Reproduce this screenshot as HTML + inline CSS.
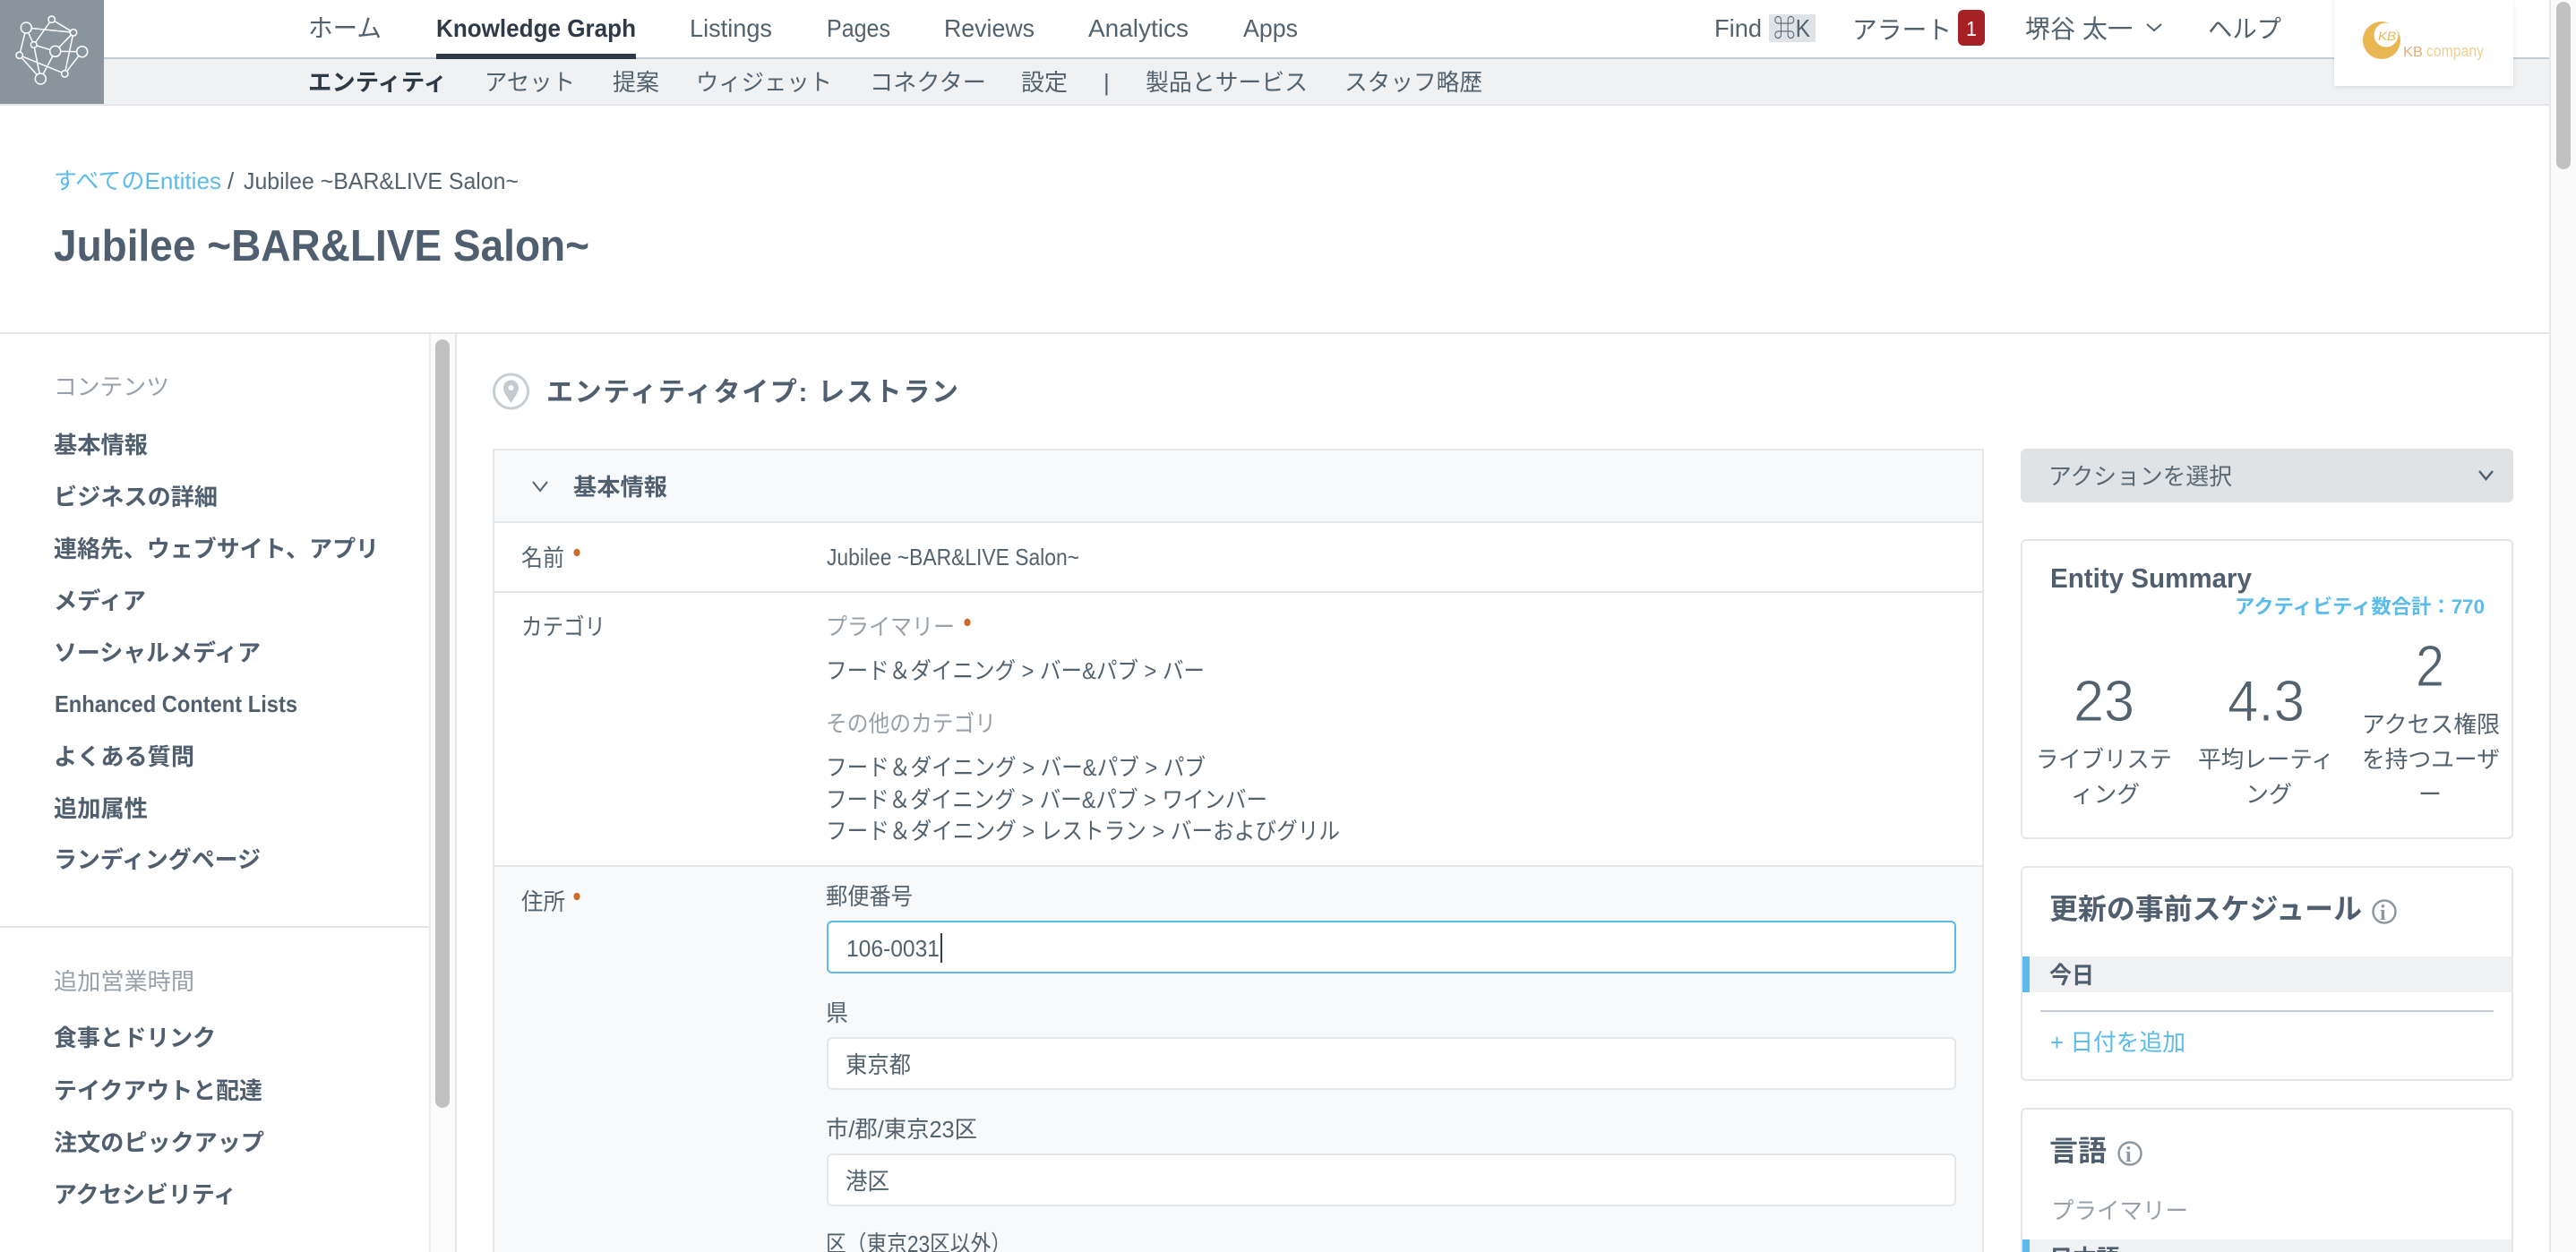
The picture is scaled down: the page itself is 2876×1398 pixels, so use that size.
<!DOCTYPE html>
<html lang="ja"><head><meta charset="utf-8"><title>Jubilee ~BAR&amp;LIVE Salon~</title>
<style>
html,body{margin:0;padding:0;width:2876px;height:1398px;overflow:hidden;background:#fff}
#page{position:relative;width:2876px;height:1398px;overflow:hidden;background:#fff}
.a{position:absolute;box-sizing:border-box}
svg.t{position:absolute;left:0;top:0}
svg.t text{font-family:"Liberation Sans","Noto Sans CJK JP",sans-serif;font-size:26px;fill:#53626f}
.b{font-weight:700}
.h{font-size:28px !important}
.g{fill:#98a1a9 !important}
.l{fill:#5bbcec !important}
.n{fill:#4f5f6f !important}
.big{font-size:65px !important;stroke:#fff;stroke-width:.9px}
</style></head><body>
<div id="page">
<!-- page chrome -->
<div class="a" style="left:116px;top:64px;width:2730px;height:2px;background:#c4ccd3"></div>
<div class="a" style="left:116px;top:66px;width:2730px;height:50px;background:#eff1f3"></div>
<div class="a" style="left:0;top:116px;width:2846px;height:2px;background:#e3e5e8"></div>
<div class="a" style="left:487px;top:60px;width:223px;height:6px;background:#2f3a48"></div>
<div class="a" style="left:0;top:0;width:116px;height:116px;background:#8a949d"></div>
<div class="a" style="left:1975px;top:16px;width:52px;height:31px;background:#e0e3e6"></div>
<div class="a" style="left:2186px;top:11px;width:30px;height:40px;background:#a72024;border-radius:6px"></div>
<div class="a" style="left:2606px;top:0;width:200px;height:96px;background:#fff;box-shadow:0 1px 4px rgba(0,0,0,.1)"></div>
<!-- page scrollbar -->
<div class="a" style="left:2846px;top:0;width:30px;height:1398px;background:#fafafa;border-left:2px solid #e8e8e8"></div>
<div class="a" style="left:2854px;top:2px;width:16px;height:187px;background:#c1c1c1;border-radius:8px"></div>
<!-- header divider -->
<div class="a" style="left:0;top:371px;width:2846px;height:2px;background:#e3e7ea"></div>
<!-- sidebar -->
<div class="a" style="left:479px;top:373px;width:31px;height:1025px;background:#fbfbfb;border-left:2px solid #ececec;border-right:2px solid #e3e7ea"></div>
<div class="a" style="left:486px;top:379px;width:16px;height:858px;background:#c1c1c1;border-radius:8px"></div>
<div class="a" style="left:0;top:1034px;width:479px;height:2px;background:#e3e7ea"></div>
<!-- main panel -->
<div class="a" style="left:550px;top:501px;width:1665px;height:900px;border:2px solid #e3e7ea;background:#fff"></div>
<div class="a" style="left:552px;top:503px;width:1661px;height:81px;background:#f8f9fb;border-bottom:2px solid #e3e7ea"></div>
<div class="a" style="left:552px;top:660px;width:1661px;height:2px;background:#e3e7ea"></div>
<div class="a" style="left:552px;top:966px;width:1661px;height:432px;background:#f8f9fb;border-top:2px solid #e3e7ea"></div>
<div class="a" style="left:923px;top:1028px;width:1261px;height:59px;background:#fff;border:2px solid #5bbcec;border-radius:6px"></div>
<div class="a" style="left:923px;top:1158px;width:1261px;height:59px;background:#fff;border:2px solid #e3e7ea;border-radius:6px"></div>
<div class="a" style="left:923px;top:1288px;width:1261px;height:59px;background:#fff;border:2px solid #e3e7ea;border-radius:6px"></div>
<div class="a" style="left:1050px;top:1042px;width:2px;height:33px;background:#33404d"></div>
<!-- right column -->
<div class="a" style="left:2256px;top:501px;width:550px;height:60px;background:#e0e3e6;border-radius:6px"></div>
<div class="a" style="left:2256px;top:602px;width:550px;height:335px;border:2px solid #e3e7ea;border-radius:6px"></div>
<div class="a" style="left:2256px;top:967px;width:550px;height:240px;border:2px solid #e3e7ea;border-radius:6px"></div>
<div class="a" style="left:2258px;top:1068px;width:546px;height:40px;background:#eff1f3;border-left:8px solid #5bbcec"></div>
<div class="a" style="left:2278px;top:1128px;width:506px;height:2px;background:#c6ced5"></div>
<div class="a" style="left:2256px;top:1237px;width:550px;height:200px;border:2px solid #e3e7ea;border-radius:6px"></div>
<div class="a" style="left:2258px;top:1384px;width:546px;height:40px;background:#eff1f3;border-left:8px solid #5bbcec"></div>

<svg class="t" width="2876" height="1398" viewBox="0 0 2876 1398" xmlns="http://www.w3.org/2000/svg">
<!-- logo -->
<g fill="none" stroke="#fff" stroke-width="1.5">
<path d="M29.3 31L82 36.3M29.3 31L37.7 50M29.3 31L21.7 61.7M57.7 21.7L82 36.3M57.7 21.7L37.7 50M37.7 50L61.7 57.3M37.7 50L45.3 88M61.7 57.3L82 36.3M61.7 57.3L91.7 57.7M61.7 57.3L45.3 88M91.7 57.7L72.3 82.3M82 36.3L72.3 82.3M21.7 61.7L45.3 88M21.7 61.7L72.3 82.3"/>
<g fill="#8a949d"><circle cx="29.3" cy="31" r="6"/><circle cx="57.7" cy="21.7" r="3.7"/><circle cx="82" cy="36.3" r="3.7"/><circle cx="37.7" cy="50" r="3.4"/><circle cx="61.7" cy="57.3" r="6"/><circle cx="91.7" cy="57.7" r="6"/><circle cx="21.7" cy="61.7" r="3.7"/><circle cx="72.3" cy="82.3" r="3.7"/><circle cx="45.3" cy="88" r="6"/></g>
</g>
<!-- KB logo -->
<circle cx="2659" cy="45" r="21" fill="#e9b752"/><circle cx="2664" cy="39" r="13.5" fill="#fff"/>
<text x="2655" y="45" style="font-size:14px;font-style:italic;fill:#e9b752" textLength="20" lengthAdjust="spacingAndGlyphs">KB</text>
<text x="2683" y="63" style="font-size:16px;fill:#e6ac78" textLength="22" lengthAdjust="spacingAndGlyphs">KB</text>
<text x="2709" y="63" style="font-size:18px;fill:#f0cf95" textLength="64" lengthAdjust="spacingAndGlyphs">company</text>

<!-- top nav -->
<text class="h" x="344" y="41" textLength="82" lengthAdjust="spacingAndGlyphs">ホーム</text>
<text class="h b" x="487" y="41" textLength="223" lengthAdjust="spacingAndGlyphs" style="fill:#2f3a48">Knowledge Graph</text>
<text class="h" x="770" y="41" textLength="92" lengthAdjust="spacingAndGlyphs">Listings</text>
<text class="h" x="923" y="41" textLength="71" lengthAdjust="spacingAndGlyphs">Pages</text>
<text class="h" x="1054" y="41" textLength="101" lengthAdjust="spacingAndGlyphs">Reviews</text>
<text class="h" x="1215" y="41" textLength="112" lengthAdjust="spacingAndGlyphs">Analytics</text>
<text class="h" x="1388" y="41" textLength="61" lengthAdjust="spacingAndGlyphs">Apps</text>
<text class="h" x="1914" y="41" textLength="53" lengthAdjust="spacingAndGlyphs">Find</text>
<text class="h" x="1980" y="41" textLength="41" lengthAdjust="spacingAndGlyphs" style="font-size:25px">⌘K</text>
<text class="h" x="2068" y="43" textLength="111" lengthAdjust="spacingAndGlyphs">アラート</text>
<text x="2195" y="40" textLength="12" lengthAdjust="spacingAndGlyphs" style="font-size:23px;fill:#fff">1</text>
<text class="h" x="2261" y="42" textLength="120" lengthAdjust="spacingAndGlyphs">堺谷 太一</text>
<polyline points="2397,27 2405,34 2413,27" fill="none" stroke="#53626f" stroke-width="2"/>
<text class="h" x="2465" y="42" textLength="82" lengthAdjust="spacingAndGlyphs">ヘルプ</text>

<!-- sub nav -->
<text class="b" x="344" y="101" textLength="155" lengthAdjust="spacingAndGlyphs" style="fill:#2f3a48">エンティティ</text>
<text x="541" y="101" textLength="101" lengthAdjust="spacingAndGlyphs">アセット</text>
<text x="684" y="101" textLength="52" lengthAdjust="spacingAndGlyphs">提案</text>
<text x="777" y="101" textLength="152" lengthAdjust="spacingAndGlyphs">ウィジェット</text>
<text x="971" y="101" textLength="130" lengthAdjust="spacingAndGlyphs">コネクター</text>
<text x="1140" y="101" textLength="52" lengthAdjust="spacingAndGlyphs">設定</text>
<text x="1232" y="101">|</text>
<text x="1279" y="101" textLength="181" lengthAdjust="spacingAndGlyphs">製品とサービス</text>
<text x="1501" y="101" textLength="154" lengthAdjust="spacingAndGlyphs">スタッフ略歴</text>

<!-- breadcrumb & title -->
<text class="l" x="60" y="211" textLength="187" lengthAdjust="spacingAndGlyphs">すべてのEntities</text>
<text x="254" y="211">/</text>
<text x="272" y="211" textLength="307" lengthAdjust="spacingAndGlyphs">Jubilee ~BAR&amp;LIVE Salon~</text>
<text class="b n" x="60" y="291" textLength="598" lengthAdjust="spacingAndGlyphs" style="font-size:49px">Jubilee ~BAR&amp;LIVE Salon~</text>

<!-- sidebar -->
<text class="g" x="60" y="441" textLength="129" lengthAdjust="spacingAndGlyphs">コンテンツ</text>
<text class="b n" x="60" y="506" textLength="105" lengthAdjust="spacingAndGlyphs">基本情報</text>
<text class="b n" x="60" y="564" textLength="183" lengthAdjust="spacingAndGlyphs">ビジネスの詳細</text>
<text class="b n" x="60" y="622" textLength="363" lengthAdjust="spacingAndGlyphs">連絡先、ウェブサイト、アプリ</text>
<text class="b n" x="60" y="680" textLength="103" lengthAdjust="spacingAndGlyphs">メディア</text>
<text class="b n" x="60" y="738" textLength="231" lengthAdjust="spacingAndGlyphs">ソーシャルメディア</text>
<text class="b n" x="61" y="795" textLength="271" lengthAdjust="spacingAndGlyphs">Enhanced Content Lists</text>
<text class="b n" x="60" y="854" textLength="157" lengthAdjust="spacingAndGlyphs">よくある質問</text>
<text class="b n" x="60" y="912" textLength="105" lengthAdjust="spacingAndGlyphs">追加属性</text>
<text class="b n" x="60" y="969" textLength="231" lengthAdjust="spacingAndGlyphs">ランディングページ</text>
<text class="g" x="60" y="1105" textLength="157" lengthAdjust="spacingAndGlyphs">追加営業時間</text>
<text class="b n" x="60" y="1168" textLength="181" lengthAdjust="spacingAndGlyphs">食事とドリンク</text>
<text class="b n" x="60" y="1227" textLength="233" lengthAdjust="spacingAndGlyphs">テイクアウトと配達</text>
<text class="b n" x="60" y="1285" textLength="235" lengthAdjust="spacingAndGlyphs">注文のピックアップ</text>
<text class="b n" x="60" y="1343" textLength="204" lengthAdjust="spacingAndGlyphs">アクセシビリティ</text>

<!-- entity type -->
<circle cx="570.5" cy="437" r="19" fill="#fff" stroke="#c6ced3" stroke-width="3"/>
<path d="M570.5 450C566 443 562 438 562 433a8.5 8.5 0 0 1 17 0C579 438 575 443 570.5 450Z" fill="#c2cbd0"/><circle cx="570.5" cy="433" r="3" fill="#fff"/>
<text class="b n" x="610" y="448" textLength="460" lengthAdjust="spacing" style="font-size:30px">エンティティタイプ: レストラン</text>

<!-- basic info -->
<polyline points="595,538 603,548 611,538" fill="none" stroke="#53626f" stroke-width="2"/>
<text class="b n" x="640" y="553" textLength="105" lengthAdjust="spacingAndGlyphs">基本情報</text>
<text x="582" y="632" textLength="48" lengthAdjust="spacingAndGlyphs">名前</text>
<ellipse cx="644" cy="617" rx="3.6" ry="4.2" fill="#d06a2c"/>
<text x="923" y="631" textLength="282" lengthAdjust="spacingAndGlyphs">Jubilee ~BAR&amp;LIVE Salon~</text>
<text x="582" y="709" textLength="94" lengthAdjust="spacingAndGlyphs">カテゴリ</text>
<text class="g" x="922" y="709" textLength="144" lengthAdjust="spacingAndGlyphs">プライマリー</text>
<ellipse cx="1080" cy="695" rx="3.6" ry="4.2" fill="#d06a2c"/>
<text x="922" y="758" textLength="423" lengthAdjust="spacingAndGlyphs">フード＆ダイニング &gt; バー&amp;パブ &gt; バー</text>
<text class="g" x="922" y="817" textLength="190" lengthAdjust="spacingAndGlyphs">その他のカテゴリ</text>
<text x="922" y="866" textLength="424" lengthAdjust="spacingAndGlyphs">フード＆ダイニング &gt; バー&amp;パブ &gt; パブ</text>
<text x="922" y="902" textLength="493" lengthAdjust="spacingAndGlyphs">フード＆ダイニング &gt; バー&amp;パブ &gt; ワインバー</text>
<text x="922" y="937" textLength="574" lengthAdjust="spacingAndGlyphs">フード＆ダイニング &gt; レストラン &gt; バーおよびグリル</text>

<!-- address -->
<text x="582" y="1016" textLength="49" lengthAdjust="spacingAndGlyphs">住所</text>
<ellipse cx="644" cy="1001" rx="3.6" ry="4.2" fill="#d06a2c"/>
<text x="922" y="1010" textLength="97" lengthAdjust="spacingAndGlyphs">郵便番号</text>
<text x="945" y="1068" textLength="104" lengthAdjust="spacingAndGlyphs">106-0031</text>
<text x="922" y="1140" textLength="25" lengthAdjust="spacingAndGlyphs">県</text>
<text x="944" y="1198" textLength="73" lengthAdjust="spacingAndGlyphs">東京都</text>
<text x="922" y="1270" textLength="169" lengthAdjust="spacingAndGlyphs">市/郡/東京23区</text>
<text x="944" y="1328" textLength="49" lengthAdjust="spacingAndGlyphs">港区</text>
<text x="922" y="1398" textLength="207" lengthAdjust="spacingAndGlyphs">区（東京23区以外）</text>

<!-- select -->
<text x="2287" y="541" textLength="205" lengthAdjust="spacingAndGlyphs" style="fill:#5b6975">アクションを選択</text>
<polyline points="2768,526 2775.5,535 2783,526" fill="none" stroke="#53626f" stroke-width="2.5"/>

<!-- entity summary -->
<text class="b n" x="2289" y="656" textLength="225" lengthAdjust="spacingAndGlyphs" style="font-size:31px">Entity Summary</text>
<text class="b l" x="2495" y="685" textLength="279" lengthAdjust="spacingAndGlyphs" style="font-size:22px">アクティビティ数合計：770</text>
<text class="big" x="2315" y="805" textLength="68" lengthAdjust="spacingAndGlyphs">23</text>
<text class="big" x="2487" y="805" textLength="86" lengthAdjust="spacingAndGlyphs">4.3</text>
<text class="big" x="2697" y="766" textLength="32" lengthAdjust="spacingAndGlyphs">2</text>
<text x="2273" y="857" textLength="152" lengthAdjust="spacingAndGlyphs">ライブリステ</text>
<text x="2312" y="896" textLength="77" lengthAdjust="spacingAndGlyphs">ィング</text>
<text x="2454" y="857" textLength="152" lengthAdjust="spacingAndGlyphs">平均レーティ</text>
<text x="2507" y="896" textLength="52" lengthAdjust="spacingAndGlyphs">ング</text>
<text x="2637" y="818" textLength="154" lengthAdjust="spacingAndGlyphs">アクセス権限</text>
<text x="2637" y="857" textLength="154" lengthAdjust="spacingAndGlyphs">を持つユーザ</text>
<text x="2700" y="896" textLength="26" lengthAdjust="spacingAndGlyphs">ー</text>

<!-- schedule -->
<text class="b n" x="2288" y="1026" textLength="349" lengthAdjust="spacingAndGlyphs" style="font-size:32px">更新の事前スケジュール</text>
<circle cx="2662" cy="1018" r="12.5" fill="none" stroke="#8d97a1" stroke-width="2.5"/>
<text x="2657" y="1027" style="font-family:'Liberation Serif',serif;font-size:24px;font-weight:700;fill:#8d97a1">i</text>
<text class="b n" x="2288" y="1098" textLength="50" lengthAdjust="spacingAndGlyphs">今日</text>
<text class="l" x="2289" y="1173" textLength="151" lengthAdjust="spacingAndGlyphs">+ 日付を追加</text>

<!-- language -->
<text class="b n" x="2288" y="1296" textLength="64" lengthAdjust="spacingAndGlyphs" style="font-size:32px">言語</text>
<circle cx="2378" cy="1288" r="12.5" fill="none" stroke="#8d97a1" stroke-width="2.5"/>
<text x="2373" y="1297" style="font-family:'Liberation Serif',serif;font-size:24px;font-weight:700;fill:#8d97a1">i</text>
<text class="g" x="2290" y="1361" textLength="153" lengthAdjust="spacingAndGlyphs">プライマリー</text>
<text class="b n" x="2288" y="1414" textLength="79" lengthAdjust="spacingAndGlyphs">日本語</text>
</svg>
</div>
</body></html>
